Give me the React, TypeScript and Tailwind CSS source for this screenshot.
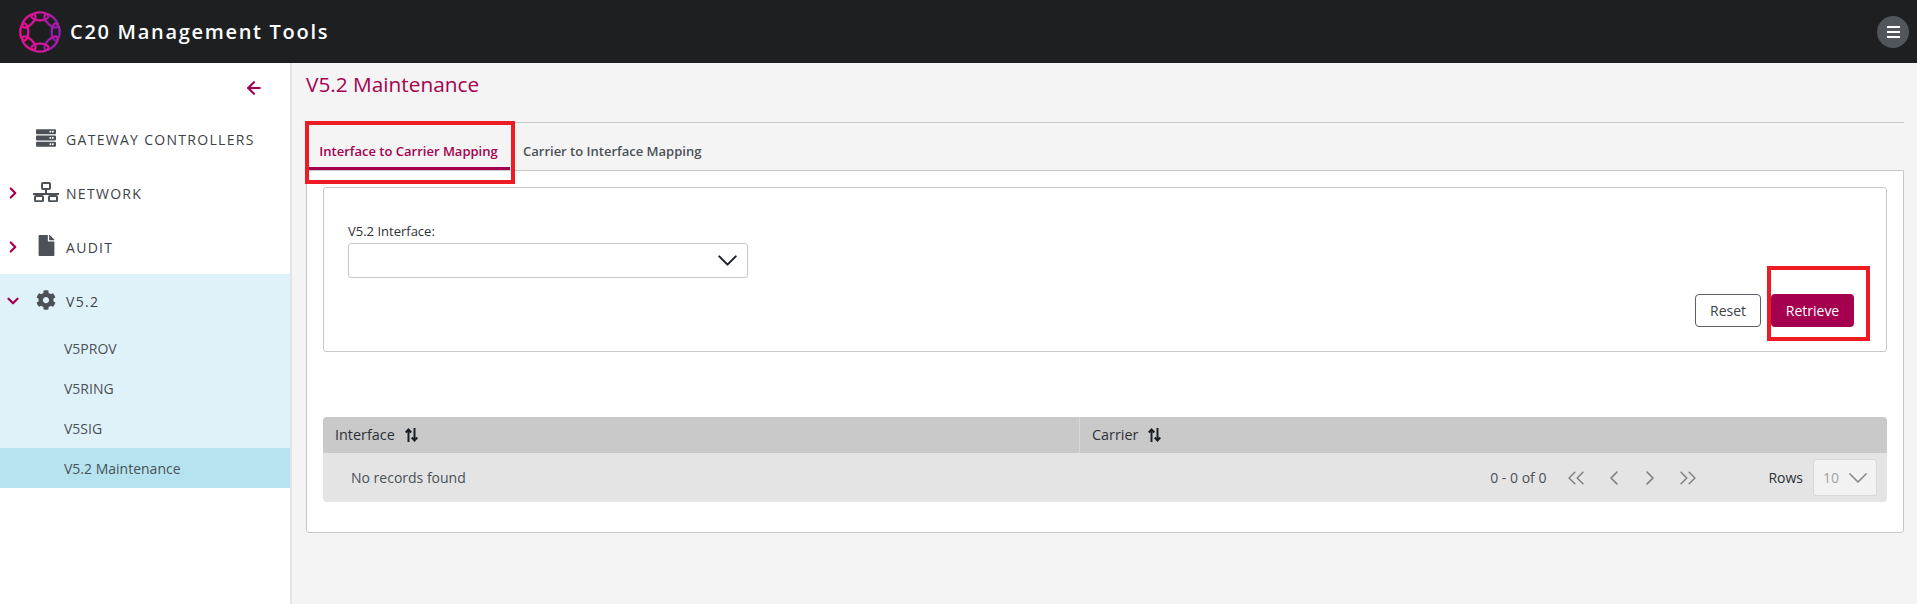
import React from "react";
import { ArrowLeft, ChevronRight, ChevronDown, ChevronLeft, ChevronsLeft, ChevronsRight } from "lucide-react";
import { FaServer, FaFile, FaCog } from "react-icons/fa";

function Logo() {
  const items = [0, 45, 90, 135, 180, 225, 270, 315];
  return (
    <svg width="42" height="42" viewBox="0 0 42 42" fill="none">
      <defs>
        <linearGradient id="lg" x1="0" y1="0" x2="42" y2="0" gradientUnits="userSpaceOnUse">
          <stop offset="0" stopColor="#ee0d8c" />
          <stop offset="0.55" stopColor="#c8189f" />
          <stop offset="1" stopColor="#7a1fb5" />
        </linearGradient>
      </defs>
      {items.map((a) => {
        const r = (a * Math.PI) / 180;
        const cx = 21 + 15.7 * Math.sin(r);
        const cy = 21 - 15.7 * Math.cos(r);
        return (
          <ellipse key={a} cx={cx} cy={cy} rx="8.6" ry="4" stroke="url(#lg)" strokeWidth="2.3" transform={`rotate(${a} ${cx} ${cy})`} />
        );
      })}
    </svg>
  );
}

function NetworkIcon() {
  return (
    <svg width="26" height="20" viewBox="0 0 26 20" fill="none" stroke="#4b5157" strokeWidth="2">
      <rect x="9" y="1" width="8" height="6" rx="1" />
      <path d="M0 12h26M13 7v5M6 12v2M20 12v2" />
      <rect x="2" y="14" width="8" height="5.2" rx="1" />
      <rect x="16" y="14" width="8" height="5.2" rx="1" />
    </svg>
  );
}

function SortIcon() {
  return (
    <svg width="13" height="14" viewBox="0 0 13 14" fill="none" stroke="#1a1f26" strokeWidth="2">
      <path d="M3.5 14V1.5M.7 4.5l2.8-3 2.8 3" />
      <path d="M9.5 0v12.5M6.7 9.5l2.8 3 2.8-3" />
    </svg>
  );
}

function NavItem({ icon, label, chevron }: { icon: React.ReactNode; label: string; chevron?: "r" | "d" }) {
  return (
    <div className="flex h-[54px] items-center">
      <div className="flex w-[30px] shrink-0 justify-center pr-[5px]">
        {chevron === "r" && <ChevronRight size={18} strokeWidth={3} className="text-[#a50050]" />}
        {chevron === "d" && <ChevronDown size={18} strokeWidth={3} className="text-[#a50050]" />}
      </div>
      <div className="flex w-[36px] shrink-0 justify-center pb-[3px] pr-[4px] text-[#4b5157]">{icon}</div>
      <span className="text-[14px] font-medium tracking-[1.3px] text-[#3d4247]">{label}</span>
    </div>
  );
}

function SubItem({ label, active }: { label: string; active?: boolean }) {
  return (
    <div className={`flex h-10 items-center pl-[64px] text-[14px] text-[#4b5157] ${active ? "bg-[#b5e4f0]" : ""}`}>{label}</div>
  );
}

export default function App() {
  return (
    <div className="flex h-[604px] w-[1917px] flex-col overflow-hidden bg-[#f4f4f4] font-['Open_Sans',sans-serif]">
      <header className="flex h-[63px] shrink-0 items-center justify-between bg-[#1e1f21] pl-[19px] pr-[8px]">
        <div className="flex items-center gap-[9px]">
          <Logo />
          <span className="text-[20px] font-semibold tracking-[1.7px] text-white">C20 Management Tools</span>
        </div>
        <div className="flex h-8 w-8 items-center justify-center rounded-full bg-[#50565b]">
          <div className="flex h-[12px] w-[13px] flex-col justify-between">
            <div className="h-[2px] bg-white" />
            <div className="h-[2px] bg-white" />
            <div className="h-[2px] bg-white" />
          </div>
        </div>
      </header>
      <div className="flex min-h-0 flex-1">
        <aside className="w-[292px] shrink-0 border-r-2 border-[#e4e4e4] bg-white">
          <div className="flex h-[49px] items-center justify-end pr-[26px] pt-[1px]">
            <ArrowLeft size={20} strokeWidth={2.6} className="text-[#a50050]" />
          </div>
          <NavItem icon={<FaServer size={20} color="#4b5157" />} label="GATEWAY CONTROLLERS" />
          <NavItem icon={<NetworkIcon />} label="NETWORK" chevron="r" />
          <NavItem icon={<FaFile size={21} color="#4b5157" />} label="AUDIT" chevron="r" />
          <div className="bg-[#e0f2f9]">
            <NavItem icon={<FaCog size={20} color="#4b5157" />} label="V5.2" chevron="d" />
            <SubItem label="V5PROV" />
            <SubItem label="V5RING" />
            <SubItem label="V5SIG" />
            <SubItem label="V5.2 Maintenance" active />
          </div>
        </aside>
        <main className="min-w-0 flex-1 pl-[14px] pr-[13px]">
          <h1 className="flex h-[59px] items-start pt-[8px] text-[20.8px] font-medium leading-[27px] text-[#a50050]">V5.2 Maintenance</h1>
          <div className="relative border-t border-[#c8c8c8]">
            <div className="absolute left-[-1px] top-[-2px] h-[63px] w-[210px] border-[4px] border-[#ed1c24]" />
            <div className="flex h-[47px] items-end">
              <div className="ml-[3px] flex h-[45px] w-[201px] items-center justify-center border-b-[3px] border-[#a50050] pr-[2px] pt-[12px] text-[13px] font-semibold text-[#a50050]">
                Interface to Carrier Mapping
              </div>
              <div className="flex h-[45px] items-center pb-[3px] pl-[13px] pt-[12px] text-[13px] font-semibold text-[#4b5157]">Carrier to Interface Mapping</div>
            </div>
            <section className="h-[363px] rounded-b-[3px] border border-[#c8c8c8] bg-white px-4 pt-[16px]">
              <div className="h-[165px] rounded-[3px] border border-[#c8c8c8] px-6 pt-[34px]">
                <label className="block text-[13px] font-medium leading-[18px] text-[#2d3136]">V5.2 Interface:</label>
                <div className="mt-[3px] flex h-[35px] w-[400px] items-center justify-end rounded-[3px] border border-[#c8c8c8] pr-[3px]">
                  <ChevronDown size={33} strokeWidth={1.5} className="text-[#1f2329]" />
                </div>
                <div className="mt-[16px] flex justify-end gap-[10px] pr-[8px]">
                  <button className="h-[33px] w-[66px] rounded-[4px] border border-[#5a6066] bg-white text-[14px] text-[#3d4247]">Reset</button>
                  <div className="relative">
                    <button className="h-[33px] w-[83px] rounded-[4px] bg-[#a50050] text-[14px] text-white">Retrieve</button>
                    <div className="absolute left-[-4px] top-[-28px] h-[75px] w-[103px] border-[4px] border-[#ed1c24]" />
                  </div>
                </div>
              </div>
              <div className="mt-[65px] overflow-hidden rounded-[4px]">
                <div className="flex h-[36px] bg-[#c9c9c9] text-[14.4px] font-medium text-[#2d3136]">
                  <div className="flex w-[757px] items-center gap-[10px] border-r border-[#d8d8d8] pl-3">Interface <SortIcon /></div>
                  <div className="flex flex-1 items-center gap-[10px] pl-3">Carrier <SortIcon /></div>
                </div>
                <div className="flex h-[49px] items-center bg-[#e4e4e4] pl-7 pr-[10px] text-[14px] text-[#4b5157]">
                  <span className="flex-1">No records found</span>
                  <span className="mr-[16px]">0 - 0 of 0</span>
                  <div className="flex items-center gap-[12px] text-[#7d7d7d]">
                    <ChevronsLeft size={28} strokeWidth={1.2} />
                    <ChevronLeft size={24} strokeWidth={1.6} />
                    <ChevronRight size={24} strokeWidth={1.6} />
                    <ChevronsRight size={28} strokeWidth={1.2} />
                  </div>
                  <span className="ml-[66px] text-[#2d3136]">Rows</span>
                  <div className="ml-[10px] flex h-[37px] w-[64px] items-center justify-between rounded-[3px] border border-[#d8d8d8] bg-[#f2f2f2] pl-[9px] pr-[2px] text-[#a3a3a3]">
                    <span>10</span>
                    <ChevronDown size={32} strokeWidth={1.3} className="text-[#8a8a8a]" />
                  </div>
                </div>
              </div>
            </section>
          </div>
        </main>
      </div>
    </div>
  );
}
